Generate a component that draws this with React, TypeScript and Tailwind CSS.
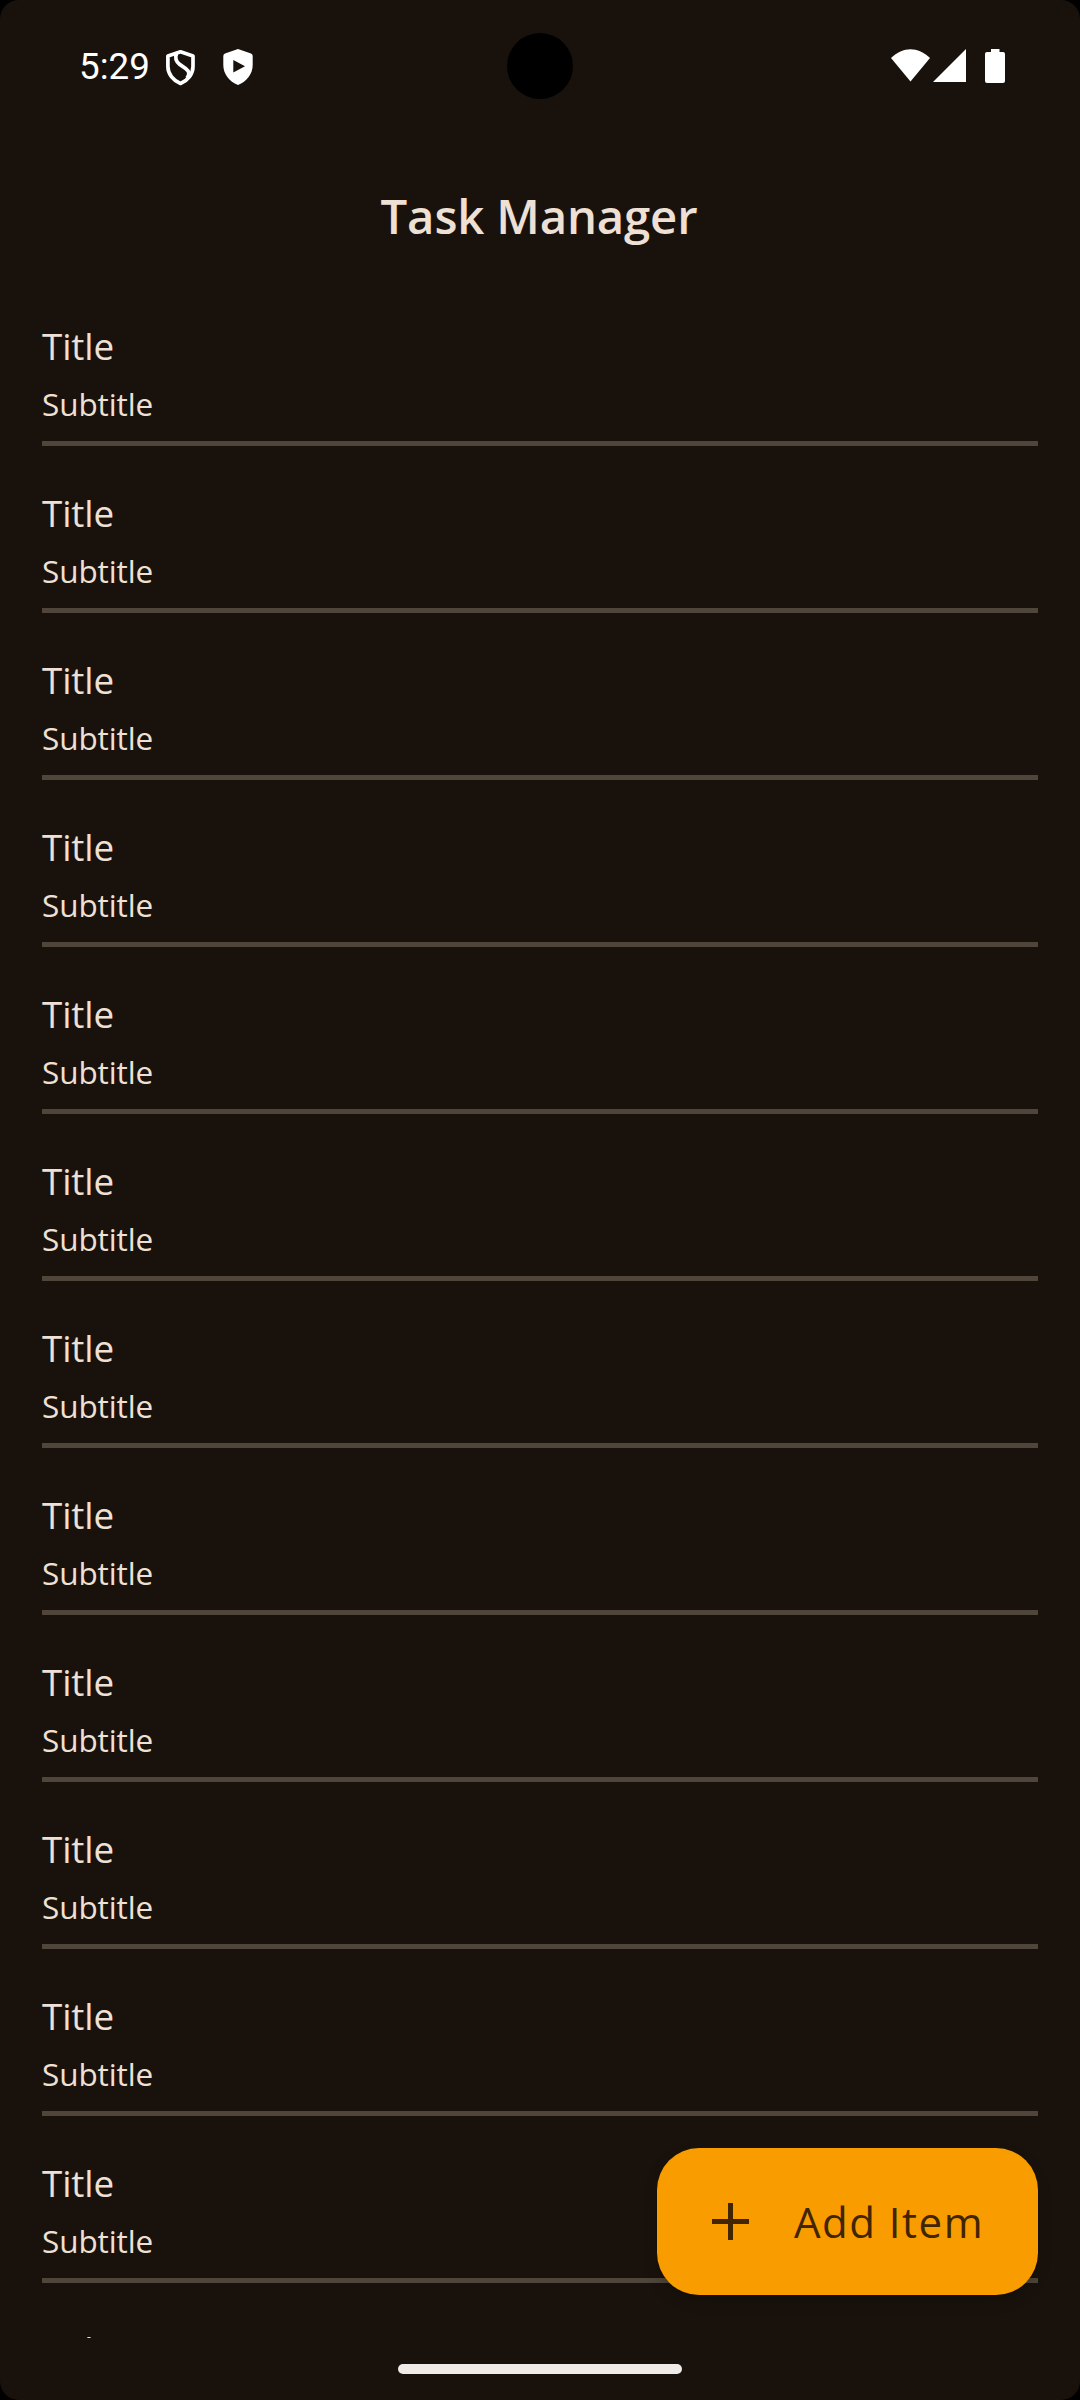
import React from "react";

const items = Array.from({ length: 13 }, (_, i) => ({ id: i, title: "Title", subtitle: "Subtitle" }));

function StatusBar() {
  return (
    <div className="relative flex h-[132px] shrink-0 items-center pl-[79px] font-['Roboto',sans-serif]">
      <span className="w-[87px] text-[36.75px] leading-[43px] text-white">5:29</span>
      <svg className="mt-[3px] h-[36px] w-[30px] shrink-0" viewBox="0 0 30 36" fill="none" stroke="#fff" strokeWidth="3.700" strokeLinejoin="round">
        <path d="M14.500 1.800 L27 6 V16.500 C27 24 22 30.500 14.500 33.500 C7 30.500 1.900 24 1.900 16.500 V6 Z" />
        <path d="M10.500 3.500 C9 7.500 10 11.500 13.500 14.300 C16.500 16.600 19.500 17.500 22 20.800 C23.800 23.300 22.500 25.800 21 28" />
      </svg>
      <svg className="mt-[2px] ml-[27px] h-[36px] w-[30px] shrink-0" viewBox="0 0 30 36" fill="#fff">
        <path fillRule="evenodd" d="M15 0 L28 4.400 Q29.700 5 29.700 7 V16 C29.700 25 23.800 32.500 15 36 C6.200 32.500 .3 25 .3 16 V7 Q.3 5 2 4.400 Z M10.300 11 V23.500 L22 17.200 Z" />
      </svg>
      <div className="absolute top-[33px] left-1/2 size-[66px] -translate-x-1/2 rounded-full bg-black" />
      <div className="mr-[75px] ml-auto flex h-[34px] items-start">
        <svg className="h-[34px] w-[39px]" viewBox="0 0 39 34" fill="#fff">
          <path d="M0 9 C12 -2.800 27 -2.800 39 9 L19.500 32.500 Z" />
        </svg>
        <svg className="ml-[3px] h-[34px] w-[33px]" viewBox="0 0 33 34" fill="#fff">
          <path d="M33 0 V33 H0 Z" />
        </svg>
        <svg className="ml-[19px] h-[34px] w-[20px]" viewBox="0 0 20 34" fill="#fff">
          <path d="M6 0 H14.500 V3 H18 Q20 3 20 5 V32 Q20 34 18 34 H2 Q0 34 0 32 V5 Q0 3 2 3 H6 Z" />
        </svg>
      </div>
    </div>
  );
}

export default function App() {
  return (
    <div className="h-[2400px] w-[1080px] bg-black">
      <div className="relative flex h-full flex-col overflow-hidden rounded-[19px] bg-[#19120c] font-['Open_Sans',sans-serif] text-[#efe0d5]">
        <StatusBar />
        <header className="flex h-[168px] shrink-0 items-center justify-center pr-[2px]">
          <h1 className="text-[47.25px] leading-[64px] font-semibold tracking-[-0.15px]">Task Manager</h1>
        </header>
        <ul className="h-[2038px] shrink-0 overflow-hidden px-[42px]">
          {items.map((item) => (
            <li key={item.id} className="flex flex-col py-[21px]">
              <span className="text-[36.75px] leading-[50px] tracking-[-0.1px]">{item.title}</span>
              <span className="mt-[11px] text-[31.5px] leading-[43px] tracking-[-0.1px]">{item.subtitle}</span>
              <span className="mt-4 h-[5px] bg-[#50453a]" />
            </li>
          ))}
        </ul>
        <div className="mt-[26px] h-[10px] w-[284px] self-center rounded-full bg-[#efebe9]" />
        <button className="absolute right-[42px] bottom-[105px] flex h-[147px] w-[381px] items-center rounded-[42px] bg-[#f99c00] pl-[55px] text-[#412400] shadow-[0_6px_14px_rgba(0,0,0,0.2)]">
          <svg className="h-[37px] w-[37px]" viewBox="0 0 37 37" fill="currentColor">
            <path d="M16 0 H21 V16 H37 V21 H21 V37 H16 V21 H0 V16 H16 Z" />
          </svg>
          <span className="ml-[45px] text-[42px] leading-[57px] tracking-[1.5px]">Add Item</span>
        </button>
      </div>
    </div>
  );
}
